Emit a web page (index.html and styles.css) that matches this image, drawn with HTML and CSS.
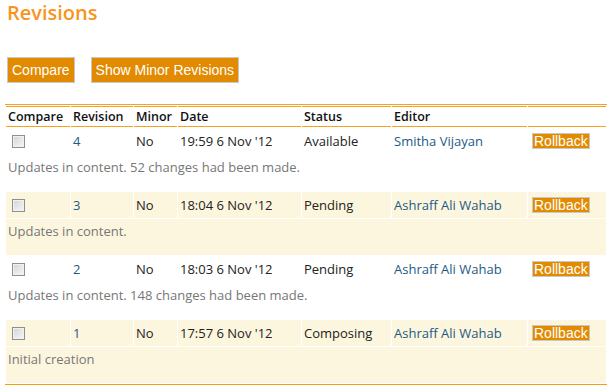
FILE: index.html
```html
<!DOCTYPE html>
<html>
  <head>
    <meta name="viewport" content="width=device-width, initial-scale=1.0" />
    <title>Revisions</title>
    <link rel="stylesheet" href="styles.css">
  </head>
  <body>
    <div id="page">
      <h1 id="title">Revisions</h1>
      <div id="actions">
        <button class="action-button">Compare</button>
        <button class="action-button">Show Minor Revisions</button>
      </div>
      <table id="revisions">
        <thead>
          <tr>
            <th class="col-compare">Compare</th>
            <th class="col-revision">Revision</th>
            <th class="col-minor">Minor</th>
            <th class="col-date">Date</th>
            <th class="col-status">Status</th>
            <th class="col-editor">Editor</th>
            <th class="col-action"></th>
          </tr>
        </thead>
        <tbody>
          <tr class="main">
            <td><input type="checkbox" class="pick" /></td>
            <td><a href="#">4</a></td>
            <td>No</td>
            <td>19:59 6 Nov '12</td>
            <td>Available</td>
            <td><a href="#">Smitha Vijayan</a></td>
            <td><button class="rollback">Rollback</button></td>
          </tr>
          <tr class="desc">
            <td colspan="7">Updates in content. 52 changes had been made.</td>
          </tr>
          <tr class="main alt">
            <td><input type="checkbox" class="pick" /></td>
            <td><a href="#">3</a></td>
            <td>No</td>
            <td>18:04 6 Nov '12</td>
            <td>Pending</td>
            <td><a href="#">Ashraff Ali Wahab</a></td>
            <td><button class="rollback">Rollback</button></td>
          </tr>
          <tr class="desc alt">
            <td colspan="7">Updates in content.</td>
          </tr>
          <tr class="main">
            <td><input type="checkbox" class="pick" /></td>
            <td><a href="#">2</a></td>
            <td>No</td>
            <td>18:03 6 Nov '12</td>
            <td>Pending</td>
            <td><a href="#">Ashraff Ali Wahab</a></td>
            <td><button class="rollback">Rollback</button></td>
          </tr>
          <tr class="desc">
            <td colspan="7">Updates in content. 148 changes had been made.</td>
          </tr>
          <tr class="main alt">
            <td><input type="checkbox" class="pick" /></td>
            <td><a href="#">1</a></td>
            <td>No</td>
            <td>17:57 6 Nov '12</td>
            <td>Composing</td>
            <td><a href="#">Ashraff Ali Wahab</a></td>
            <td><button class="rollback">Rollback</button></td>
          </tr>
          <tr class="desc alt">
            <td colspan="7">Initial creation</td>
          </tr>
        </tbody>
      </table>
    </div>
  </body>
</html>
```

FILE: styles.css
```css
body {
  margin: 0;
  padding: 0;
  background-color: #fff;
  font-family: "Open Sans", "Noto Sans", sans-serif;
  font-size: 13px;
  color: #222;
}

#page {
  padding: 0 6px 0 5px;
}

#title {
  margin: 0 0 0 2px;
  font-size: 20px;
  line-height: 26px;
  font-weight: 600;
  color: #f8941d;
}

#actions {
  display: flex;
  gap: 16px;
  margin: 31px 0 21px 2px;
}

.action-button {
  height: 26px;
  padding: 0 4px;
  background-color: #e28a00;
  border: 1px solid #c8c8c8;
  color: #fff;
  font-family: "Liberation Sans", Arial, sans-serif;
  font-size: 14px;
  cursor: pointer;
}

#revisions {
  width: 602px;
  table-layout: fixed;
  border-collapse: separate;
  border-spacing: 1px;
  border-top: 1px solid #f6a21e;
  border-bottom: 1px solid #f99d10;
}

#revisions th {
  height: 19px;
  padding: 0 2px;
  text-align: left;
  font-size: 12.5px;
  font-weight: 600;
  color: #111;
  white-space: nowrap;
  border-top: 1px solid #f6a21e;
  border-bottom: 1px solid #f6a21e;
}

.col-compare { width: 60px; }
.col-revision { width: 58px; }
.col-minor { width: 39px; }
.col-date { width: 119px; }
.col-status { width: 85px; }
.col-editor { width: 131px; }

#revisions td {
  padding: 0 2px;
  white-space: nowrap;
}

#revisions a {
  color: #1c5a86;
  text-decoration: none;
}

.main td {
  height: 26px;
  vertical-align: middle;
}

.desc td {
  height: 33px;
  padding-top: 3px !important;
  vertical-align: top;
  color: #777;
}

.alt td {
  background-color: #fdf6df;
}

.pick {
  appearance: none;
  display: block;
  width: 13px;
  height: 13px;
  margin: 0 0 0 4px;
  border: 1px solid #8f8f8f;
  background: linear-gradient(135deg, #d4d4d4, #f7f7f7);
  box-shadow: inset 0 0 0 1px #f2f2f2;
}

.rollback {
  display: block;
  height: 16px;
  margin-left: 2px;
  padding: 0 1px;
  line-height: 14px;
  background-color: #e28a00;
  border: 1px solid #c8c8c8;
  color: #fff;
  font-family: "Liberation Sans", Arial, sans-serif;
  font-size: 14px;
  cursor: pointer;
}
```
